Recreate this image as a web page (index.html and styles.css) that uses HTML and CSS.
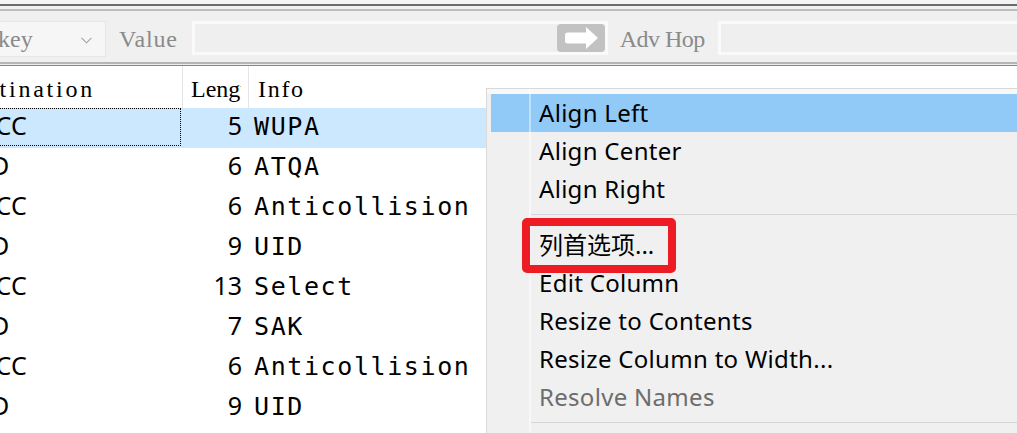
FILE: index.html
```html
<!DOCTYPE html>
<html>
<head>
<meta charset="utf-8">
<link rel="stylesheet" href="styles.css">
</head>
<body>
<div class="app">
  <div class="top"></div>
  <div class="rule-dark"></div>
  <div class="filter-wrap">
    <div class="filterbar">
      <div class="combo">
        <span class="combo-text">key</span>
        <svg class="chevron" width="11" height="7" viewBox="0 0 11 7"><polyline points="0.5,0.8 5.5,5.8 10.5,0.8" fill="none" stroke="#a2a2a2" stroke-width="1.1"/></svg>
      </div>
      <span class="label lbl-value">Value</span>
      <div class="input input-main">
        <div class="go-btn">
          <svg width="48" height="28" viewBox="0 0 48 28"><rect x="8" y="8.5" width="24" height="11" rx="2.5" fill="#fff"/><polygon points="29,3 41,14 29,25" fill="#fff"/></svg>
        </div>
      </div>
      <span class="label lbl-adv">Adv Hop</span>
      <div class="input input-adv"></div>
    </div>
  </div>
  <div class="rule-bottom"></div>

  <div class="table">
    <div class="thead">
      <div class="th th-dest"><span class="dest-head">Destination</span></div>
      <div class="th th-len"><span>Length</span></div>
      <div class="th th-info">Info</div>
    </div>
    <div class="row selected">
      <div class="td td-dest focus"><span class="picc">PICC</span></div>
      <div class="td td-len">5</div>
      <div class="td td-info">WUPA</div>
    </div>
    <div class="row">
      <div class="td td-dest"><span class="pcd">PCD</span></div>
      <div class="td td-len">6</div>
      <div class="td td-info">ATQA</div>
    </div>
    <div class="row">
      <div class="td td-dest"><span class="picc">PICC</span></div>
      <div class="td td-len">6</div>
      <div class="td td-info">Anticollision</div>
    </div>
    <div class="row">
      <div class="td td-dest"><span class="pcd">PCD</span></div>
      <div class="td td-len">9</div>
      <div class="td td-info">UID</div>
    </div>
    <div class="row">
      <div class="td td-dest"><span class="picc">PICC</span></div>
      <div class="td td-len">13</div>
      <div class="td td-info">Select</div>
    </div>
    <div class="row">
      <div class="td td-dest"><span class="pcd">PCD</span></div>
      <div class="td td-len">7</div>
      <div class="td td-info">SAK</div>
    </div>
    <div class="row">
      <div class="td td-dest"><span class="picc">PICC</span></div>
      <div class="td td-len">6</div>
      <div class="td td-info">Anticollision</div>
    </div>
    <div class="row">
      <div class="td td-dest"><span class="pcd">PCD</span></div>
      <div class="td td-len">9</div>
      <div class="td td-info">UID</div>
    </div>
  </div>

  <div class="menu">
    <div class="item active">Align Left</div>
    <div class="item">Align Center</div>
    <div class="item">Align Right</div>
    <div class="sep"></div>
    <div class="item cjk">列首选项...</div>
    <div class="item">Edit Column</div>
    <div class="item">Resize to Contents</div>
    <div class="item">Resize Column to Width...</div>
    <div class="item disabled">Resolve Names</div>
    <div class="sep"></div>
    <div class="item">Colorize</div>
    <div class="highlight-box"></div>
  </div>
</div>
</body>
</html>
```
FILE: styles.css
```css
html, body {
  margin: 0;
  padding: 0;
  width: 1017px;
  height: 433px;
  overflow: hidden;
  background: #ffffff;
}

.app {
  position: relative;
  width: 1017px;
  height: 433px;
  overflow: hidden;
}

.top {
  height: 4px;
  background: #f4f4f4;
}

.rule-dark {
  height: 2px;
  background: #6b6b6b;
}

.filter-wrap {
  background: #f0f0f0;
  padding-top: 3px;
}

.filterbar {
  height: 41px;
  border-top: 2px solid #bcbcbc;
  border-bottom: 2px solid #b5b5b5;
  background: #f0f0f0;
  display: flex;
  align-items: flex-start;
  padding-top: 10px;
  box-sizing: content-box;
  overflow: hidden;
}

.rule-bottom {
  height: 1px;
  background: #ececec;
  border-bottom: 1px solid #888888;
}

.combo {
  flex: none;
  margin-left: -12px;
  width: 118px;
  height: 36px;
  box-sizing: border-box;
  background: #f6f6f6;
  border: 1px solid #e6e6e6;
  display: flex;
  align-items: flex-start;
  padding-left: 9px;
}

.combo-text {
  font-family: "Liberation Serif", serif;
  font-size: 24px;
  line-height: 25px;
  margin-top: 5px;
  color: #8a8a8a;
}

.chevron {
  margin-left: auto;
  margin-right: 13px;
  margin-top: 15px;
}

.label {
  flex: none;
  font-family: "Liberation Serif", serif;
  font-size: 24px;
  line-height: 25px;
  margin-top: 6px;
  color: #8a8a8a;
  white-space: nowrap;
}

.lbl-value {
  margin-left: 13px;
  letter-spacing: 0.8px;
}

.lbl-adv {
  margin-left: 12px;
  letter-spacing: -0.5px;
}

.input {
  flex: none;
  height: 34px;
  box-sizing: border-box;
  border: 3px solid #fafafa;
  background: #efefef;
  display: flex;
  justify-content: flex-end;
}

.input-main {
  margin-left: 14px;
  width: 416px;
}

.input-adv {
  margin-left: 13px;
  width: 360px;
}

.go-btn {
  width: 48px;
  height: 28px;
  background: #c2c2c2;
  border-radius: 4px;
  display: flex;
}

/* table */
.table {
  background: #ffffff;
}

.thead {
  display: grid;
  grid-template-columns: 183px 66px 1fr;
  height: 42px;
}

.th {
  box-sizing: border-box;
  font-family: "Liberation Serif", serif;
  font-size: 24px;
  line-height: 37px;
  padding-top: 5px;
  color: #000000;
  white-space: nowrap;
  overflow: hidden;
}

.th-dest {
  border-right: 1px solid #e5e5e5;
}

.dest-head {
  display: inline-block;
  letter-spacing: 2.75px;
  margin-left: -46px;
}

.th-len {
  border-right: 1px solid #e5e5e5;
  padding-left: 8px;
  padding-right: 7px;
}

.th-len span {
  display: block;
  overflow: hidden;
}

.th-info {
  padding-left: 9px;
  letter-spacing: 1.7px;
}

.row {
  display: grid;
  grid-template-columns: 183px 66px 1fr;
  height: 40px;
}

.row.selected {
  background: #cce8ff;
}

.td {
  box-sizing: border-box;
  white-space: nowrap;
  overflow: hidden;
  color: #000000;
}

.td-dest,
.td-len {
  font-family: "Noto Sans", sans-serif;
  font-size: 25px;
  line-height: 35px;
  padding-bottom: 5px;
}

.td-dest {
  position: relative;
}

.picc {
  display: inline-block;
  margin-left: -28px;
}

.pcd {
  display: inline-block;
  margin-left: -40px;
}

.focus::after {
  content: "";
  position: absolute;
  left: -2px;
  top: 0;
  right: 2px;
  bottom: 2px;
  border: 1px dotted #000000;
}

.td-len {
  text-align: right;
  padding-right: 7px;
}

.td-info {
  font-family: "DejaVu Sans Mono", monospace;
  font-size: 25px;
  letter-spacing: 1.6px;
  line-height: 37px;
  padding-bottom: 3px;
  padding-left: 5px;
}

/* context menu */
.menu {
  position: absolute;
  left: 486px;
  top: 88px;
  width: 560px;
  box-sizing: border-box;
  border: 1px solid #d9d9d9;
  background: #f0f0f0;
  box-shadow: inset 0 5px 0 #f8f8f8;
  padding: 5px 0 4px 4px;
}

.menu::before {
  content: "";
  position: absolute;
  left: 42px;
  top: 0;
  bottom: 0;
  width: 2px;
  background: rgba(255, 255, 255, 0.45);
  z-index: 1;
}

.item {
  height: 38px;
  line-height: 38px;
  padding-left: 48px;
  font-family: "Noto Sans", "Noto Sans CJK SC", sans-serif;
  font-size: 24px;
  letter-spacing: 0.3px;
  color: #000000;
  white-space: nowrap;
}

.item.cjk {
  letter-spacing: 0;
}

.item.active {
  background: #91c9f7;
}

.item.disabled {
  color: #6d6d6d;
}

.sep {
  height: 1px;
  background: #d5d5d5;
  margin: 6px 0 11px 40px;
}

.highlight-box {
  position: absolute;
  left: 35px;
  top: 129px;
  width: 154px;
  height: 55px;
  box-sizing: border-box;
  border: 8px solid #ed1c24;
  border-radius: 5px;
  z-index: 2;
}
```
